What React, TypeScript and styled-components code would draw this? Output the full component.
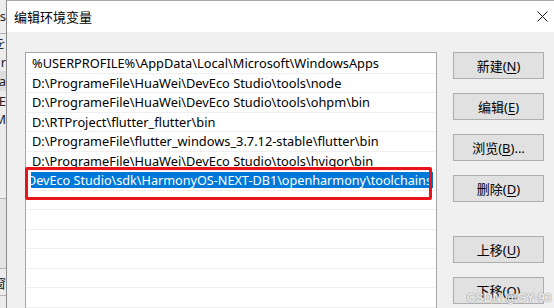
import React from "react";
import styled, { createGlobalStyle } from "styled-components";

const GlobalStyle = createGlobalStyle`
  html, body {
    margin: 0;
    padding: 0;
    width: 554px;
    height: 308px;
    overflow: hidden;
    background: #f0f0f0;
    font-family: "Noto Sans", "Noto Sans CJK SC", sans-serif;
  }
`;

const Screen = styled.div`
  position: relative;
  display: flex;
  width: 554px;
  height: 308px;
  overflow: hidden;
`;

const BackStrip = styled.div`
  width: 6px;
  flex-shrink: 0;
  display: flex;
  flex-direction: column;
  background: #ececec;
  overflow: hidden;
`;

const StripCell = styled.div<{ $h: number; $line?: boolean; $bg?: string }>`
  height: ${(p) => p.$h}px;
  display: flex;
  align-items: center;
  justify-content: flex-end;
  font-size: 13px;
  color: #222;
  white-space: nowrap;
  background: ${(p) => p.$bg || "transparent"};
  border-bottom: ${(p) => (p.$line ? "1px solid #b5b5b5" : "none")};
`;

const Dialog = styled.div`
  flex: 1;
  display: flex;
  flex-direction: column;
  border-left: 1px solid #8a8a8a;
  border-top: 1px solid #a8a8a8;
  background: #f0f0f0;
`;

const TitleBar = styled.div`
  height: 31px;
  flex-shrink: 0;
  display: flex;
  align-items: center;
  justify-content: space-between;
  padding: 0 0 0 7px;
  background: #ffffff;
`;

const Title = styled.span`
  font-size: 13px;
  color: #000;
`;

const CloseButton = styled.div`
  width: 24px;
  height: 31px;
  display: flex;
  align-items: center;
  justify-content: center;
`;

const Body = styled.div`
  flex: 1;
  display: flex;
  align-items: flex-start;
  padding: 20px 0 0 18px;
`;

const ListBox = styled.div`
  width: 410px;
  height: 300px;
  flex-shrink: 0;
  border: 1px solid #a6a6a6;
  background: #ffffff;
  padding-top: 1px;
  display: flex;
  flex-direction: column;
`;

const Row = styled.div`
  position: relative;
  height: 19.5px;
  flex-shrink: 0;
  box-sizing: border-box;
  border-bottom: 1px solid #f0f0f0;
  padding-left: 6px;
  font-size: 12.8px;
  line-height: 19px;
  color: #000;
  white-space: nowrap;
  overflow: visible;
`;

const EditRow = styled(Row)`
  padding: 1px 3px 0 5px;
`;

const EditField = styled.div`
  height: 16px;
  overflow: hidden;
  background: #0078d7;
  color: #ffffff;
  line-height: 16px;
  font-size: 12.65px;
  text-indent: -4px;
`;

const Marker = styled.div`
  position: absolute;
  left: -1px;
  right: 4px;
  top: -4px;
  bottom: -10px;
  border: 3.5px solid #e8141a;
  border-radius: 2px;
  pointer-events: none;
`;

const ButtonColumn = styled.div`
  margin-left: 16px;
  display: flex;
  flex-direction: column;
  gap: 14px;
`;

const Spacer = styled.div`
  height: 6px;
`;

const Button = styled.div`
  width: 91px;
  height: 27px;
  box-sizing: border-box;
  border: 1px solid #adadad;
  background: #e1e1e1;
  display: flex;
  align-items: center;
  justify-content: center;
  font-size: 13px;
  color: #000;
`;

const Key = styled.span`
  text-decoration: underline;
  text-underline-offset: 2px;
`;

const Watermark = styled.div`
  position: absolute;
  right: 2px;
  bottom: 3px;
  font-family: "Liberation Sans", sans-serif;
  font-size: 12px;
  font-weight: bold;
  color: rgba(255, 255, 255, 0.85);
  text-shadow: 0 0 1px #8a8a8a, 0 0 1px #8a8a8a;
  letter-spacing: 0.2px;
`;

const paths = [
  "%USERPROFILE%\\AppData\\Local\\Microsoft\\WindowsApps",
  "D:\\ProgrameFile\\HuaWei\\DevEco Studio\\tools\\node",
  "D:\\ProgrameFile\\HuaWei\\DevEco Studio\\tools\\ohpm\\bin",
  "D:\\RTProject\\flutter_flutter\\bin",
  "D:\\ProgrameFile\\flutter_windows_3.7.12-stable\\flutter\\bin",
  "D:\\ProgrameFile\\HuaWei\\DevEco Studio\\tools\\hvigor\\bin",
];

const editing = "DevEco Studio\\sdk\\HarmonyOS-NEXT-DB1\\openharmony\\toolchains";

const buttons = [
  { label: "新建", key: "N" },
  { label: "编辑", key: "E" },
  { label: "浏览", key: "B", tail: "..." },
  { label: "删除", key: "D" },
];

const moveButtons = [
  { label: "上移", key: "U" },
  { label: "下移", key: "O" },
];

const strip = [
  { h: 33, text: "s", line: true },
  { h: 18, text: "を" },
  { h: 20, text: "r" },
  { h: 20, text: "a", bg: "#dcdcdc" },
  { h: 19, text: "E" },
  { h: 19, text: "M" },
  { h: 70, text: "", line: true },
  { h: 70, text: "", bg: "#e4e4e4", line: true },
  { h: 26, text: "窗", line: true },
  { h: 12, text: "" },
];

const App: React.FC = () => {
  return (
    <>
      <GlobalStyle />
      <Screen>
        <BackStrip>
          {strip.map((s, i) => (
            <StripCell key={i} $h={s.h} $line={s.line} $bg={s.bg}>
              {s.text}
            </StripCell>
          ))}
        </BackStrip>
        <Dialog>
          <TitleBar>
            <Title>编辑环境变量</Title>
            <CloseButton>
              <svg width="11" height="11" viewBox="0 0 11 11">
                <path d="M0.5 0.5L10.5 10.5M10.5 0.5L0.5 10.5" stroke="#1a1a1a" strokeWidth="1" />
              </svg>
            </CloseButton>
          </TitleBar>
          <Body>
            <ListBox>
              {paths.map((p) => (
                <Row key={p}>{p}</Row>
              ))}
              <EditRow>
                <EditField>{editing}</EditField>
                <Marker />
              </EditRow>
              {Array.from({ length: 7 }).map((_, i) => (
                <Row key={i} />
              ))}
            </ListBox>
            <ButtonColumn>
              {buttons.map((b) => (
                <Button key={b.key}>
                  {b.label}(<Key>{b.key}</Key>){b.tail}
                </Button>
              ))}
              <Spacer />
              {moveButtons.map((b) => (
                <Button key={b.key}>
                  {b.label}(<Key>{b.key}</Key>)
                </Button>
              ))}
            </ButtonColumn>
          </Body>
        </Dialog>
        <Watermark>CSDN @GY-93</Watermark>
      </Screen>
    </>
  );
};

export default App;
